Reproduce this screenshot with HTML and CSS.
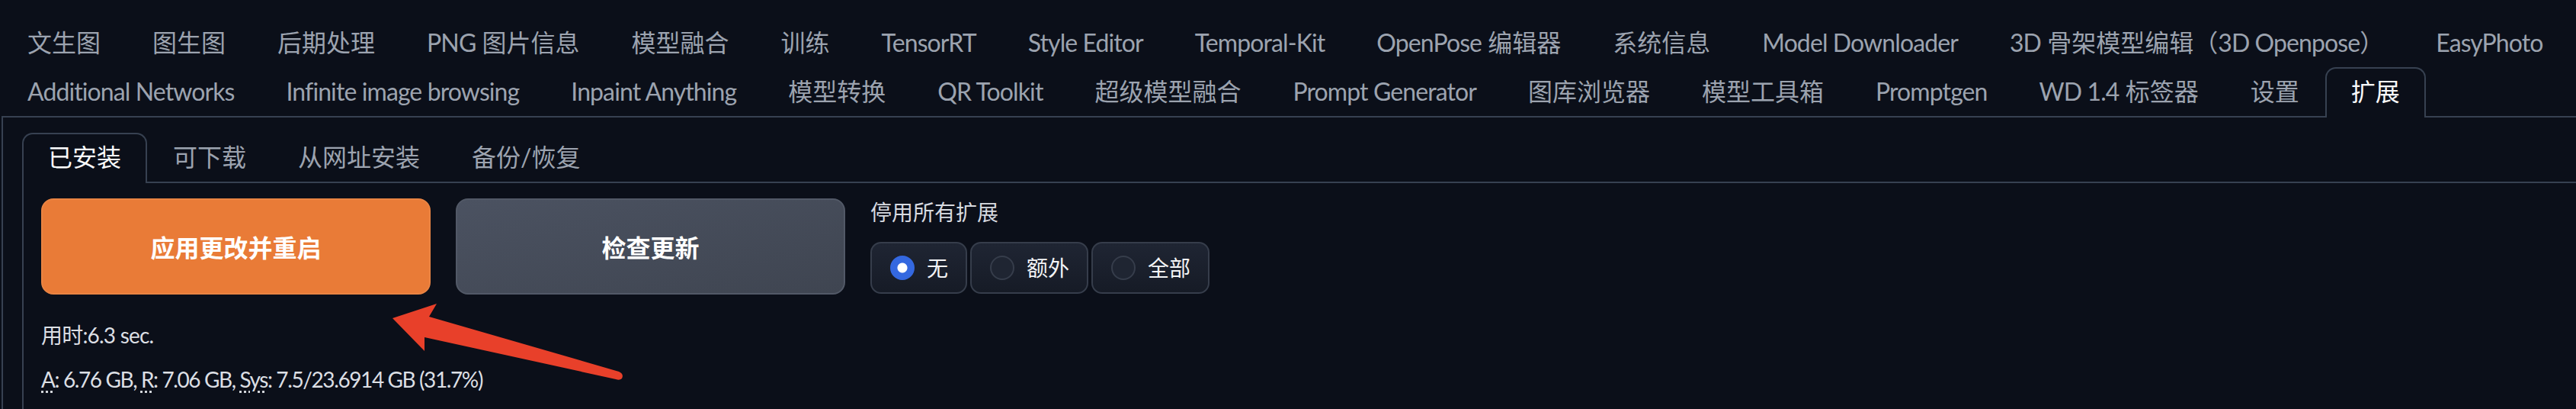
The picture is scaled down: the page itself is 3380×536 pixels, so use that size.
FILE: index.html
```html
<!DOCTYPE html>
<html lang="zh-CN">
<head>
<meta charset="utf-8">
<title>扩展</title>
<link rel="stylesheet" href="styles.css">
</head>
<body>
<div class="app">
  <div class="tabs">
    <nav class="tab-nav main-nav">
      <button class="tab">文生图</button>
      <button class="tab">图生图</button>
      <button class="tab">后期处理</button>
      <button class="tab"><span lang="en">PNG</span> 图片信息</button>
      <button class="tab">模型融合</button>
      <button class="tab">训练</button>
      <button class="tab" lang="en">TensorRT</button>
      <button class="tab" lang="en">Style Editor</button>
      <button class="tab" lang="en">Temporal-Kit</button>
      <button class="tab"><span lang="en">OpenPose</span> 编辑器</button>
      <button class="tab">系统信息</button>
      <button class="tab" lang="en">Model Downloader</button>
      <button class="tab"><span lang="en">3D</span> 骨架模型编辑（<span lang="en">3D Openpose</span>）</button>
      <button class="tab" lang="en">EasyPhoto</button>
      <button class="tab" lang="en">Additional Networks</button>
      <button class="tab" lang="en">Infinite image browsing</button>
      <button class="tab" lang="en">Inpaint Anything</button>
      <button class="tab">模型转换</button>
      <button class="tab" lang="en">QR Toolkit</button>
      <button class="tab">超级模型融合</button>
      <button class="tab" lang="en">Prompt Generator</button>
      <button class="tab">图库浏览器</button>
      <button class="tab">模型工具箱</button>
      <button class="tab" lang="en">Promptgen</button>
      <button class="tab"><span lang="en">WD 1.4</span> 标签器</button>
      <button class="tab">设置</button>
      <button class="tab selected">扩展</button>
    </nav>
    <div class="tab-panel outer-panel">
      <div class="tabs">
        <nav class="tab-nav">
          <button class="tab selected">已安装</button>
          <button class="tab">可下载</button>
          <button class="tab">从网址安装</button>
          <button class="tab">备份/恢复</button>
        </nav>
        <div class="tab-panel inner-panel">
          <div class="row">
            <button class="btn primary">应用更改并重启</button>
            <button class="btn secondary">检查更新</button>
            <div class="radio-block">
              <span class="block-label">停用所有扩展</span>
              <div class="radio-group">
                <label class="radio checked"><span class="dot"></span><span class="radio-text">无</span></label>
                <label class="radio"><span class="dot"></span><span class="radio-text">额外</span></label>
                <label class="radio"><span class="dot"></span><span class="radio-text">全部</span></label>
              </div>
            </div>
          </div>
          <div class="performance">
            <p class="time">用时:6.3 sec.</p>
            <p class="vram"><abbr title="Active: peak amount of video memory used during generation">A</abbr>: 6.76 GB, <abbr title="Reserved: total amount of video memory allocated by the Torch library">R</abbr>: 7.06 GB, <abbr title="System: peak amount of video memory allocated by all running programs, out of total capacity">Sys</abbr>: 7.5/23.6914 GB (31.7%)</p>
          </div>
        </div>
      </div>
    </div>
  </div>
  <svg class="annotation" width="3380" height="536" viewBox="0 0 3380 536">
    <path d="M515 417 L573 398 L563 415 L812 487 Q819 490 816 496 Q813 499 808 497 L557 442 L557 460 Z" fill="#e8402a"/>
  </svg>
</div>
</body>
</html>
```

FILE: styles.css
```css
* {
  box-sizing: border-box;
}

html,
body {
  margin: 0;
  background: #0b0f19;
}

body {
  font-family: "Lato", "Noto Sans CJK SC", sans-serif;
  color: #e5e7eb;
  overflow: hidden;
}

.app {
  position: relative;
  padding: 24px 0 0 2px;
  min-height: 536px;
}

.tab-nav {
  display: flex;
  flex-wrap: wrap;
  border-bottom: 2px solid #374151;
}

.tab {
  font-family: inherit;
  font-size: 32px;
  font-weight: 400;
  line-height: 48px;
  padding: 6px 32px 10px;
  margin-bottom: -2px;
  border: 2px solid transparent;
  border-bottom: none;
  border-radius: 14px 14px 0 0;
  background: none;
  color: #9ca3af;
  white-space: nowrap;
  cursor: pointer;
}

.main-nav [lang="en"] {
  letter-spacing: -0.9px;
}

.tab.selected {
  border-color: #374151;
  background: #0b0f19;
  color: #f9fafb;
}

.tab-panel {
  border-left: 2px solid #374151;
}

.outer-panel {
  padding: 20px 0 0 25px;
}

.inner-panel {
  padding: 20px 0 120px 23px;
}

.row {
  display: flex;
  gap: 33px;
  align-items: flex-start;
}

.btn {
  width: 511px;
  height: 126px;
  border-radius: 16px;
  font-family: inherit;
  font-size: 32px;
  font-weight: 700;
  color: #ffffff;
  cursor: pointer;
}

.primary {
  background: #e97b37;
  border: 2px solid #ea8443;
}

.secondary {
  background: linear-gradient(to bottom right, #4b5261, #3f4551);
  border: 2px solid #525967;
}

.radio-block {
  display: flex;
  flex-direction: column;
}

.block-label {
  font-size: 28px;
  line-height: 34px;
  color: #d7dae0;
  margin-top: 1px;
  margin-bottom: 22px;
}

.radio-group {
  display: flex;
  gap: 4px;
}

.radio {
  display: flex;
  align-items: center;
  gap: 16px;
  height: 68px;
  padding: 0 23px 0 24px;
  border: 2px solid #363d4b;
  border-radius: 14px;
  background: linear-gradient(to bottom, #1f2533, #161b26);
}

.dot {
  width: 32px;
  height: 32px;
  border-radius: 50%;
  border: 2px solid #363d4b;
  background: #1f2532;
  flex: none;
}

.radio.checked .dot {
  border-color: #3468e0;
  background: radial-gradient(circle, #ffffff 0 6px, #3468e0 7px);
}

.radio-text {
  font-size: 28px;
  line-height: 40px;
  color: #f3f4f6;
}

.performance {
  margin-top: 33px;
  font-size: 28px;
  line-height: 40px;
  color: #dcdfe4;
}

.performance p {
  margin: 0;
}

.performance .time {
  letter-spacing: -0.8px;
}

.performance .vram {
  margin-top: 18px;
  letter-spacing: -1.4px;
}

.vram abbr {
  text-decoration: underline dotted;
  text-underline-offset: 4px;
}

.annotation {
  position: absolute;
  top: 0;
  left: 0;
  pointer-events: none;
}
```
